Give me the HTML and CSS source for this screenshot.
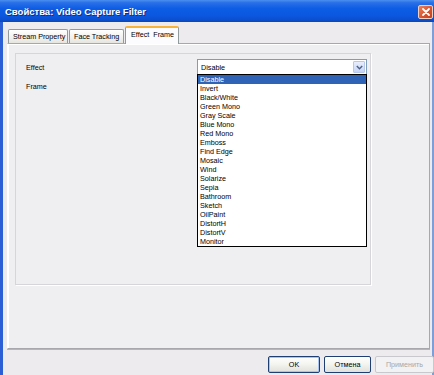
FILE: index.html
```html
<!DOCTYPE html>
<html>
<head>
<meta charset="utf-8">
<link rel="stylesheet" href="styles.css">
</head>
<body>
<div class="window">
  <div class="titlebar">
    <span class="title">Свойства: Video Capture Filter</span>
    <span class="close"><svg width="10" height="10" viewBox="0 0 10 10"><path d="M2 2 L8 8 M8 2 L2 8" stroke="#fff" stroke-width="1.8" stroke-linecap="round"/></svg></span>
  </div>
  <div class="body">
    <div class="tabs">
      <div class="tab">Stream Property</div>
      <div class="tab">Face Tracking</div>
      <div class="tab active">Effect&nbsp; Frame</div>
    </div>
    <div class="panel">
      <div class="group">
        <div class="row">
          <span class="label">Effect</span>
          <div class="combo">
            <div class="combo-field">
              <span class="value">Disable</span>
              <span class="combo-btn"><svg width="7" height="5" viewBox="0 0 7 5"><path d="M0.8 1 L3.5 3.8 L6.2 1" fill="none" stroke="#4d6185" stroke-width="1.4"/></svg></span>
            </div>
            <ul class="list">
              <li class="sel">Disable</li>
              <li>Invert</li>
              <li>Black/White</li>
              <li>Green Mono</li>
              <li>Gray Scale</li>
              <li>Blue Mono</li>
              <li>Red Mono</li>
              <li>Emboss</li>
              <li>Find Edge</li>
              <li>Mosaic</li>
              <li>Wind</li>
              <li>Solarize</li>
              <li>Sepia</li>
              <li>Bathroom</li>
              <li>Sketch</li>
              <li>OilPaint</li>
              <li>DistortH</li>
              <li>DistortV</li>
              <li>Monitor</li>
            </ul>
          </div>
        </div>
        <div class="row row2">
          <span class="label">Frame</span>
        </div>
      </div>
    </div>
    <div class="buttons">
      <button class="btn default">OK</button>
      <button class="btn">Отмена</button>
      <button class="btn disabled">Применить</button>
    </div>
  </div>
</div>
</body>
</html>
```
FILE: styles.css
```css
html, body {
  margin: 0;
  padding: 0;
  width: 434px;
  height: 375px;
  overflow: hidden;
  background: #edebed;
  font-family: "Liberation Sans", Arial, sans-serif;
}

.window {
  width: 434px;
  height: 375px;
  display: flex;
  flex-direction: column;
  box-sizing: border-box;
  border-left: 3px solid #2c5fd6;
  border-right: 2px solid #7f9ed8;
}

.titlebar {
  height: 22px;
  margin-left: -3px;
  margin-right: -2px;
  display: flex;
  align-items: center;
  justify-content: space-between;
  padding: 0 1px 0 5px;
  background: linear-gradient(#4a90f0 0%, #2a70e8 12%, #0d5ce4 40%, #0a58e0 70%, #0a4fd0 90%, #0b45b8 100%);
}

.title {
  color: #fff;
  font-weight: bold;
  font-size: 9.5px;
  text-shadow: 1px 1px 0 #0a2f8a;
}

.close {
  width: 15px;
  height: 14px;
  margin-top: 1px;
  box-sizing: border-box;
  border: 1px solid #f3d0c4;
  border-radius: 2px;
  background: linear-gradient(135deg, #e8825e, #d8502b 60%, #c2401d);
  display: flex;
  align-items: center;
  justify-content: center;
}

.body {
  flex: 1;
  display: flex;
  flex-direction: column;
  padding: 0 0 0 4px;
}

.tabs {
  display: flex;
  align-items: flex-end;
  height: 21px;
  padding-left: 1px;
  position: relative;
  z-index: 1;
}

.tab {
  font-size: 7.2px;
  color: #000;
  white-space: nowrap;
  height: 14px;
  line-height: 13px;
  padding: 0 0 0 4px;
  margin-right: 1px;
  box-sizing: border-box;
  border: 1px solid #919b9c;
  border-bottom: none;
  border-radius: 2px 2px 0 0;
  background: linear-gradient(#ffffff, #f0f0ee 60%, #e6e5e0);
  overflow: hidden;
}

.tab:nth-child(1) { width: 60px; }
.tab:nth-child(2) { width: 55px; }

.tab.active {
  height: 18px;
  width: 54px;
  line-height: 14px;
  border-top: 2px solid #f8b43a;
  background: #fcfcfe;
  margin-bottom: -1px;
  padding-left: 5px;
}

.panel {
  height: 306px;
  width: 423px;
  box-sizing: border-box;
  border: 1px solid #a8a7ab;
  border-left-color: #fff;
  box-shadow: inset 1px 1px 0 #ffffff, 0 1px 0 #b6b5bb;
  background: #efeef0;
  padding: 9px 0 0 7px;
}

.group {
  width: 356px;
  height: 232px;
  box-sizing: border-box;
  border: 1px solid #d6d5da;
  box-shadow: 1px 1px 0 #ffffff;
  padding: 5px 3px 0 10px;
  display: flex;
  flex-direction: column;
}

.row {
  display: flex;
  align-items: center;
  justify-content: space-between;
  height: 16px;
}

.row2 {
  margin-top: 3px;
}

.label {
  font-size: 7.2px;
  color: #000;
}

.combo {
  position: relative;
  width: 170px;
  height: 16px;
}

.combo-field {
  height: 16px;
  box-sizing: border-box;
  border: 1px solid #7f9db9;
  background: #fff;
  display: flex;
  align-items: center;
  justify-content: space-between;
  padding: 0 1px 0 3px;
}

.value {
  font-size: 7.2px;
  color: #000;
}

.combo-btn {
  width: 12px;
  height: 12px;
  box-sizing: border-box;
  border: 1px solid #b8c8e8;
  border-radius: 1px;
  background: linear-gradient(#e8eefc, #c6d4f6);
  display: flex;
  align-items: center;
  justify-content: center;
}

.list {
  position: absolute;
  left: 0;
  top: 15px;
  width: 170px;
  margin: 0;
  padding: 0;
  list-style: none;
  box-sizing: border-box;
  border: 1px solid #000;
  background: #fff;
  z-index: 5;
}

.list li {
  font-size: 7.2px;
  height: 9px;
  line-height: 9px;
  padding-left: 2px;
  color: #000;
}

.list li.sel {
  background: #2f63b6;
  color: #fff;
}

.buttons {
  display: flex;
  justify-content: flex-end;
  gap: 4px;
  margin-top: 7px;
  margin-right: -2px;
}

.btn {
  font-family: "Liberation Sans", Arial, sans-serif;
  font-size: 7.2px;
  height: 17px;
  padding: 0;
  box-sizing: border-box;
  border: 1px solid #1f3e72;
  border-radius: 2px;
  background: linear-gradient(#ffffff, #f3f3ef 50%, #e2e1da);
  color: #000;
}

.btn:nth-child(1) { width: 52px; }
.btn:nth-child(2) { width: 47px; }
.btn:nth-child(3) { width: 59px; }

.btn.default {
  box-shadow: inset 0 0 0 1px #a8c4f0;
}

.btn.disabled {
  border-color: #c9c8cc;
  color: #a8a8a8;
  background: #f2f1f3;
}
```
